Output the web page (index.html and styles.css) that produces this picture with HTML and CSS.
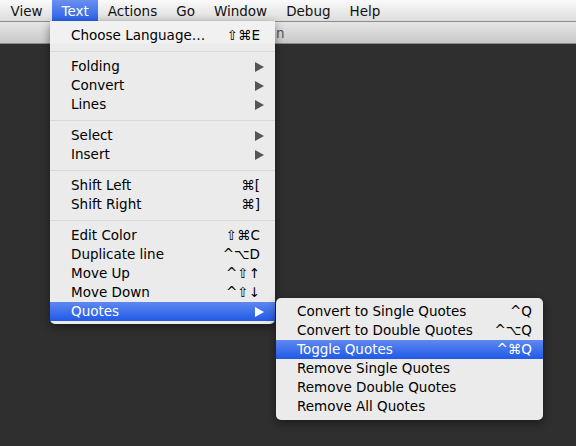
FILE: index.html
```html
<!DOCTYPE html>
<html>
<head>
<meta charset="utf-8">
<link rel="stylesheet" href="styles.css">
</head>
<body>
<div class="menubar">
  <span class="mb-item">View</span>
  <span class="mb-item active">Text</span>
  <span class="mb-item">Actions</span>
  <span class="mb-item">Go</span>
  <span class="mb-item">Window</span>
  <span class="mb-item">Debug</span>
  <span class="mb-item">Help</span>
</div>
<div class="toolbar"><span class="title">n</span></div>
<div class="desk"></div>

<div class="menu main">
  <div class="row"><span class="label">Choose Language…</span><span class="key">⇧⌘E</span></div>
  <div class="sep"></div>
  <div class="row"><span class="label">Folding</span><span class="arrow"></span></div>
  <div class="row"><span class="label">Convert</span><span class="arrow"></span></div>
  <div class="row"><span class="label">Lines</span><span class="arrow"></span></div>
  <div class="sep"></div>
  <div class="row"><span class="label">Select</span><span class="arrow"></span></div>
  <div class="row"><span class="label">Insert</span><span class="arrow"></span></div>
  <div class="sep"></div>
  <div class="row"><span class="label">Shift Left</span><span class="key">⌘[</span></div>
  <div class="row"><span class="label">Shift Right</span><span class="key">⌘]</span></div>
  <div class="sep"></div>
  <div class="row"><span class="label">Edit Color</span><span class="key">⇧⌘C</span></div>
  <div class="row"><span class="label">Duplicate line</span><span class="key">^⌥D</span></div>
  <div class="row"><span class="label">Move Up</span><span class="key">^⇧↑</span></div>
  <div class="row"><span class="label">Move Down</span><span class="key">^⇧↓</span></div>
  <div class="row hl"><span class="label">Quotes</span><span class="arrow"></span></div>
</div>

<div class="menu sub">
  <div class="row"><span class="label">Convert to Single Quotes</span><span class="key">^Q</span></div>
  <div class="row"><span class="label">Convert to Double Quotes</span><span class="key">^⌥Q</span></div>
  <div class="row hl"><span class="label">Toggle Quotes</span><span class="key">^⌘Q</span></div>
  <div class="row"><span class="label">Remove Single Quotes</span></div>
  <div class="row"><span class="label">Remove Double Quotes</span></div>
  <div class="row"><span class="label">Remove All Quotes</span></div>
</div>
</body>
</html>
```

FILE: styles.css
```css
html, body {
  margin: 0;
  padding: 0;
  width: 576px;
  height: 446px;
  overflow: hidden;
  background: #2f2f2f;
  font-family: "DejaVu Sans", "Liberation Sans", sans-serif;
  font-size: 13.5px;
  color: #000;
}

.menubar {
  height: 21px;
  display: flex;
  align-items: stretch;
  padding-left: 1px;
  background: linear-gradient(#fafafa, #dcdcdc);
  border-bottom: 1px solid #8c8c8c;
}

.mb-item {
  padding: 0 9.5px;
  line-height: 22px;
  color: #111;
}

.mb-item.active {
  background: linear-gradient(#6a8ff0, #2a62e8);
  color: #fff;
}

.toolbar {
  height: 21px;
  background: linear-gradient(#e6e6e6, #c8c8c8);
  border-bottom: 1px solid #8a8a8a;
  position: relative;
}

.title {
  position: absolute;
  left: 276px;
  top: 3px;
  color: #555;
}

.menu {
  position: absolute;
  background: rgba(242, 242, 242, 0.97);
  box-shadow: 0 3px 10px rgba(0, 0, 0, 0.45);
  padding: 4px 0;
}

.menu.main {
  left: 50px;
  top: 21px;
  width: 225px;
  padding-top: 5px;
  padding-bottom: 3px;
  border-radius: 0 0 5px 5px;
}

.menu.sub {
  left: 276px;
  top: 298px;
  width: 267px;
  border-radius: 5px;
}

.row {
  height: 19px;
  line-height: 19px;
  display: flex;
  justify-content: space-between;
  align-items: center;
  padding-left: 21px;
  padding-right: 11px;
}

.main .row .key {
  margin-right: 4px;
}

.row.hl {
  background: linear-gradient(#5f89f0, #1f59e6);
  color: #fff;
}

.arrow {
  width: 0;
  height: 0;
  border-top: 5px solid transparent;
  border-bottom: 5px solid transparent;
  border-left: 9px solid #555;
}

.row.hl .arrow {
  border-left-color: #fff;
}

.sep {
  height: 12px;
  display: flex;
  align-items: center;
}

.sep::before {
  content: "";
  display: block;
  width: 100%;
  height: 1px;
  background: #d8d8d8;
}
```
